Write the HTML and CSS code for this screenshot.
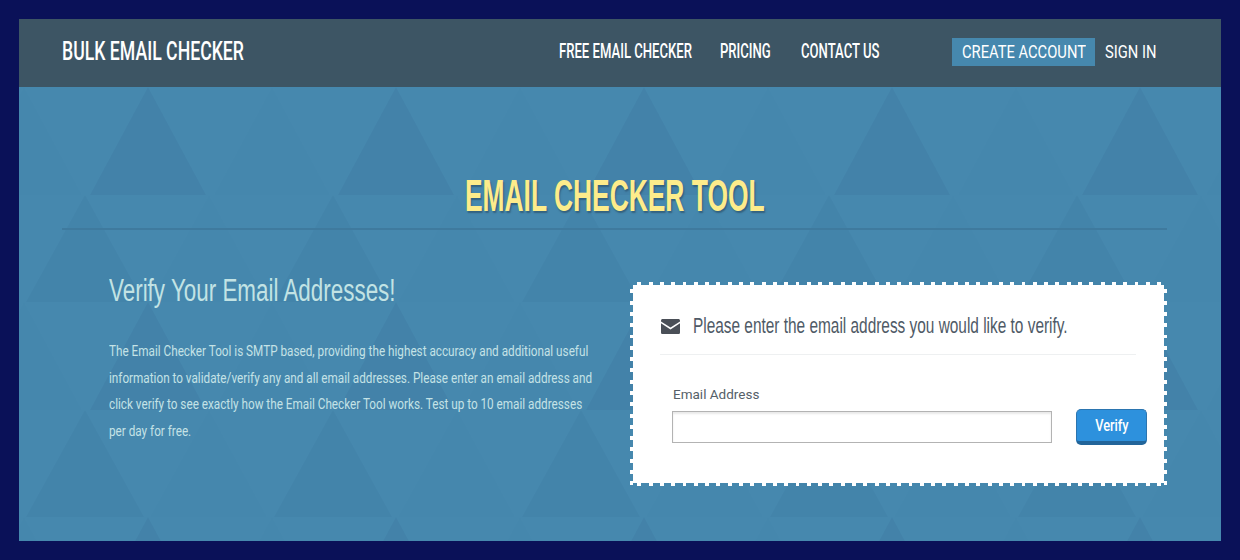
FILE: index.html
```html
<!DOCTYPE html>
<html lang="en">
<head>
    <meta charset="UTF-8">
    <title>Email Checker Tool</title>
    <link rel="stylesheet" href="styles.css">
</head>
<body>
    <div class="page">
        <!-- Top navigation -->
        <header class="topbar">
            <a class="logo" href="#"><span class="squeeze">BULK EMAIL CHECKER</span></a>
            <nav class="main-nav">
                <a href="#"><span class="squeeze">FREE EMAIL CHECKER</span></a>
                <a href="#"><span class="squeeze">PRICING</span></a>
                <a href="#"><span class="squeeze">CONTACT US</span></a>
            </nav>
            <nav class="account-nav">
                <a class="create" href="#"><span class="squeeze">CREATE ACCOUNT</span></a>
                <a class="signin" href="#"><span class="squeeze">SIGN IN</span></a>
            </nav>
        </header>

        <main class="hero">
            <!-- Triangle pattern behind the content -->
            <svg class="hero-bg" width="100%" height="100%" aria-hidden="true">
                <defs>
                    <pattern id="tri" x="0" y="0" width="248" height="215" patternUnits="userSpaceOnUse">
                        <polygon points="129,0 71,108 187,108" fill="#3f7ea5" opacity=".55"/>
                        <polygon points="66,108 7,215 125,215" fill="#3f7ea5" opacity=".4"/>
                        <polygon points="190,108 131,215 248,215" fill="#3f7ea5" opacity=".1"/>
                        <polygon points="5,0 -53,108 63,108" fill="#3f7ea5" opacity=".1"/>
                        <polygon points="253,0 195,108 311,108" fill="#3f7ea5" opacity=".1"/>
                    </pattern>
                </defs>
                <rect width="100%" height="100%" fill="url(#tri)"/>
            </svg>

            <h1 class="title"><span class="squeeze">EMAIL CHECKER TOOL</span></h1>

            <div class="columns">
                <section class="intro">
                    <h2><span class="squeeze">Verify Your Email Addresses!</span></h2>
                    <p><span class="squeeze">The Email Checker Tool is SMTP based, providing the highest accuracy and additional useful<br>
                    information to validate/verify any and all email addresses. Please enter an email address and<br>
                    click verify to see exactly how the Email Checker Tool works. Test up to 10 email addresses<br>
                    per day for free.</span></p>
                </section>

                <section class="card">
                    <div class="card-head">
                        <svg class="mail-icon" width="19" height="15" viewBox="0 0 19 15">
                            <path d="M1.600 0h15.800c.9 0 1.600.7 1.600 1.600v.8l-9.500 6.200-9.500-6.200v-.8C0 .7.7 0 1.600 0z" fill="#4a4f57"/>
                            <path d="M0 4.200l9.500 6.200 9.500-6.200v9.200c0 .9-.7 1.600-1.600 1.600H1.600C.7 15 0 14.300 0 13.400z" fill="#4a4f57"/>
                        </svg>
                        <span class="squeeze">Please enter the email address you would like to verify.</span>
                    </div>
                    <form class="verify-form">
                        <div class="field">
                            <label for="email">Email Address</label>
                            <input type="text" id="email" name="email">
                        </div>
                        <button type="submit"><span class="squeeze">Verify</span></button>
                    </form>
                </section>
            </div>
        </main>
    </div>
</body>
</html>
```

FILE: styles.css
```css
* {
    box-sizing: border-box;
}

html, body {
    height: 100%;
}

body {
    margin: 0;
    padding: 19px;
    overflow: hidden;
    background-color: #0a1158;
    font-family: "Liberation Sans", sans-serif;
}

a {
    color: #fff;
    text-decoration: none;
}

/* No condensed font is installed, so headings get squeezed sideways */
.squeeze {
    display: inline-block;
    white-space: nowrap;
    transform-origin: left center;
}

.page {
    height: 522px;
    display: flex;
    flex-direction: column;
}

.topbar {
    height: 68px;
    flex: none;
    display: flex;
    align-items: center;
    padding: 0 64px 0 43px;
    background-color: #3d5564;
    font-family: Roboto, sans-serif;
    font-weight: 500;
}

.logo {
    margin-right: auto;
    padding-bottom: 3px;
    font-size: 25px;
    line-height: 28px;
}

.logo .squeeze {
    transform: scaleX(.707);
}

.main-nav {
    display: flex;
    margin-right: 72px;
    padding-bottom: 4px;
    font-size: 20px;
}

.main-nav .squeeze {
    transform: scaleX(.655);
}

.main-nav a:nth-child(1) { width: 161px; }
.main-nav a:nth-child(2) { width: 81px; }
.main-nav a:nth-child(3) { width: 79px; }

.account-nav {
    display: flex;
    align-items: center;
    padding-bottom: 2px;
    font-size: 19px;
    font-weight: 400;
}

.account-nav a {
    height: 28px;
    line-height: 27px;
}

.account-nav .squeeze {
    transform: scaleX(.775);
}

.create {
    width: 143px;
    padding-left: 10px;
    background-color: #4688ae;
}

.signin {
    width: 52px;
    margin-left: 10px;
}

.hero {
    position: relative;
    flex: 1;
    padding: 0 54px 0 43px;
    background-color: #4688ae;
}

.hero-bg {
    position: absolute;
    left: 0;
    top: 0;
}

.title {
    position: relative;
    margin: 0;
    padding: 89px 0 12px;
    border-bottom: 2px solid #3f7a9e;
    text-align: center;
    font-size: 44px;
    line-height: 40px;
    color: #fdec8b;
    text-shadow: 2px 2px 2px #33617f;
}

.title .squeeze {
    transform: scaleX(.6);
    transform-origin: center;
}

.columns {
    position: relative;
    display: flex;
    justify-content: space-between;
    padding: 42px 0 0 47px;
}

.intro {
    width: 490px;
    padding-top: 2px;
}

.intro h2 {
    margin: 0 0 30px;
    font-size: 31px;
    line-height: 34px;
    font-weight: normal;
    color: #c2e3e4;
}

.intro h2 .squeeze {
    transform: scaleX(.723);
}

.intro p {
    margin: 0;
    font-family: Roboto, sans-serif;
    font-size: 14px;
    line-height: 26.500px;
    color: #c4e2e6;
}

.intro p .squeeze {
    transform: scaleX(.838);
}

/* White box with small square teeth along the edges */
.card {
    width: 537px;
    height: 204px;
    margin-top: 10px;
    padding: 26px 28px 0 27px;
    border: 3px solid transparent;
    background:
        linear-gradient(#fff, #fff) padding-box,
        repeating-linear-gradient(90deg, transparent 0 7.300px, #fff 7.300px 11.300px) top / 100% 3px no-repeat border-box,
        repeating-linear-gradient(90deg, transparent 0 7.300px, #fff 7.300px 11.300px) bottom / 100% 3px no-repeat border-box,
        repeating-linear-gradient(180deg, transparent 0 7.300px, #fff 7.300px 11.300px) left / 3px 100% no-repeat border-box,
        repeating-linear-gradient(180deg, transparent 0 7.300px, #fff 7.300px 11.300px) right / 3px 100% no-repeat border-box;
}

.card-head {
    display: flex;
    align-items: center;
    gap: 13px;
    padding-bottom: 13px;
    border-bottom: 1px solid #eef0f1;
    font-size: 22px;
    line-height: 30px;
    color: #4f5a66;
}

.card-head .squeeze {
    transform: scaleX(.7);
}

.mail-icon {
    flex: none;
    margin-left: 1px;
}

.verify-form {
    display: flex;
    align-items: flex-end;
    gap: 24px;
    padding: 30px 0 0 12px;
}

.field {
    flex: none;
    width: 380px;
}

.field label {
    display: block;
    margin-bottom: 8px;
    padding-left: 1px;
    font-family: Roboto, sans-serif;
    font-size: 13.500px;
    line-height: 18px;
    color: #555f69;
}

.field input {
    display: block;
    width: 100%;
    height: 32px;
    border: 1px solid #b3b3b3;
    box-shadow: inset 0 2px 2px #e9e9e9;
    background-color: #fff;
}

.verify-form button {
    flex: none;
    width: 71px;
    height: 36px;
    margin-bottom: -2px;
    padding: 0;
    border: 1px solid #2b75b0;
    border-bottom: 4px solid #22659a;
    border-radius: 5px;
    background-color: #2d91dd;
    color: #fff;
    font-family: Roboto, sans-serif;
    font-size: 16px;
    font-weight: 500;
}

.verify-form button .squeeze {
    transform: scaleX(.8);
    transform-origin: center;
}
```
